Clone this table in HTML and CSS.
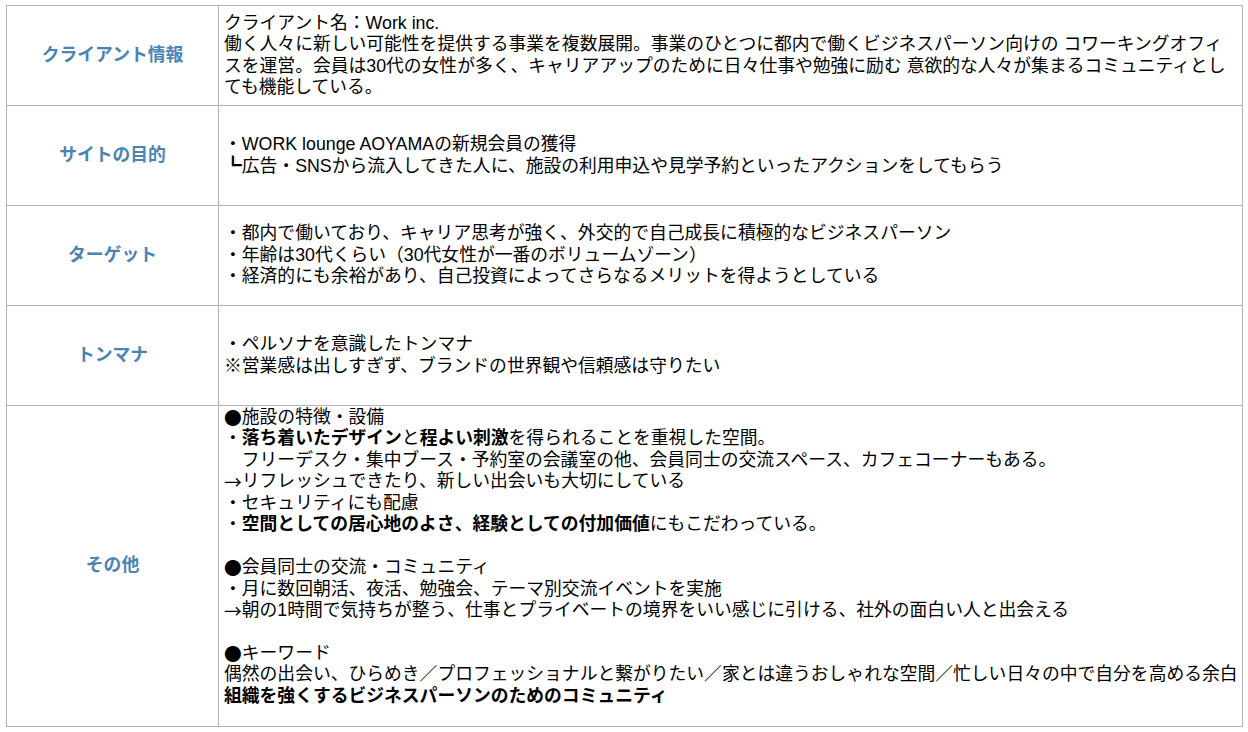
FILE: index.html
```html
<!DOCTYPE html>
<html lang="ja">
<head>
<meta charset="utf-8">
<title>サイト概要</title>
<link rel="stylesheet" href="styles.css">
</head>
<body>
<div class="page">
  <table class="sheet">
    <colgroup>
      <col class="col-label">
      <col class="col-body">
    </colgroup>
    <tr class="row">
      <th class="label">クライアント情報</th>
      <td class="body">クライアント名：Work inc.<br>働く人々に新しい可能性を提供する事業を複数展開。事業のひとつに都内で働くビジネスパーソン向けの コワーキングオフィスを運営。会員は30代の女性が多く、キャリアアップのために日々仕事や勉強に励む 意欲的な人々が集まるコミュニティとしても機能している。</td>
    </tr>
    <tr class="row">
      <th class="label">サイトの目的</th>
      <td class="body">・WORK lounge AOYAMAの新規会員の獲得<br>┗広告・SNSから流入してきた人に、施設の利用申込や見学予約といったアクションをしてもらう</td>
    </tr>
    <tr class="row">
      <th class="label">ターゲット</th>
      <td class="body">・都内で働いており、キャリア思考が強く、外交的で自己成長に積極的なビジネスパーソン<br>・年齢は30代くらい（30代女性が一番のボリュームゾーン）<br>・経済的にも余裕があり、自己投資によってさらなるメリットを得ようとしている</td>
    </tr>
    <tr class="row">
      <th class="label">トンマナ</th>
      <td class="body">・ペルソナを意識したトンマナ<br>※営業感は出しすぎず、ブランドの世界観や信頼感は守りたい</td>
    </tr>
    <tr class="row row-tall">
      <th class="label">その他</th>
      <td class="body body-top"><span class="cjk">●</span>施設の特徴・設備<br>・<b>落ち着いたデザイン</b>と<b>程よい刺激</b>を得られることを重視した空間。<br>　フリーデスク・集中ブース・予約室の会議室の他、会員同士の交流スペース、カフェコーナーもある。<br><span class="cjk">→</span>リフレッシュできたり、新しい出会いも大切にしている<br>・セキュリティにも配慮<br>・<b>空間としての居心地のよさ、経験としての付加価値</b>にもこだわっている。<br><br><span class="cjk">●</span>会員同士の交流・コミュニティ<br>・月に数回朝活、夜活、勉強会、テーマ別交流イベントを実施<br><span class="cjk">→</span>朝の1時間で気持ちが整う、仕事とプライベートの境界をいい感じに引ける、社外の面白い人と出会える<br><br><span class="cjk">●</span>キーワード<br>偶然の出会い、ひらめき／プロフェッショナルと繋がりたい／家とは違うおしゃれな空間／忙しい日々の中で自分を高める余白<br><b>組織を強くするビジネスパーソンのためのコミュニティ</b></td>
    </tr>
  </table>
</div>
</body>
</html>
```

FILE: styles.css
```css
html, body {
  margin: 0;
  padding: 0;
  background: #ffffff;
}

body {
  font-family: "Liberation Sans", "Noto Sans CJK JP", sans-serif;
  color: #000000;
}

.page {
  padding: 5px 6px 0 6px;
}

.sheet {
  border-collapse: collapse;
  width: 1237px;
  table-layout: fixed;
  font-size: 17.8px;
  line-height: 21.45px;
}

.col-label {
  width: 212px;
}

.sheet .row {
  height: 100px;
}

.sheet .row-tall {
  height: 321px;
}

.label,
.body {
  border: 1px solid #b4b4b4;
  vertical-align: middle;
}

.label {
  text-align: center;
  font-weight: bold;
  color: #4a84b5;
  padding: 0 4px;
}

.body {
  text-align: left;
  padding: 0 4px 0 5px;
}

.body b {
  font-weight: bold;
}

.cjk {
  font-family: "Noto Sans CJK JP", sans-serif;
  vertical-align: top;
}

.body-top {
  vertical-align: top;
  padding-top: 1px;
}
```
